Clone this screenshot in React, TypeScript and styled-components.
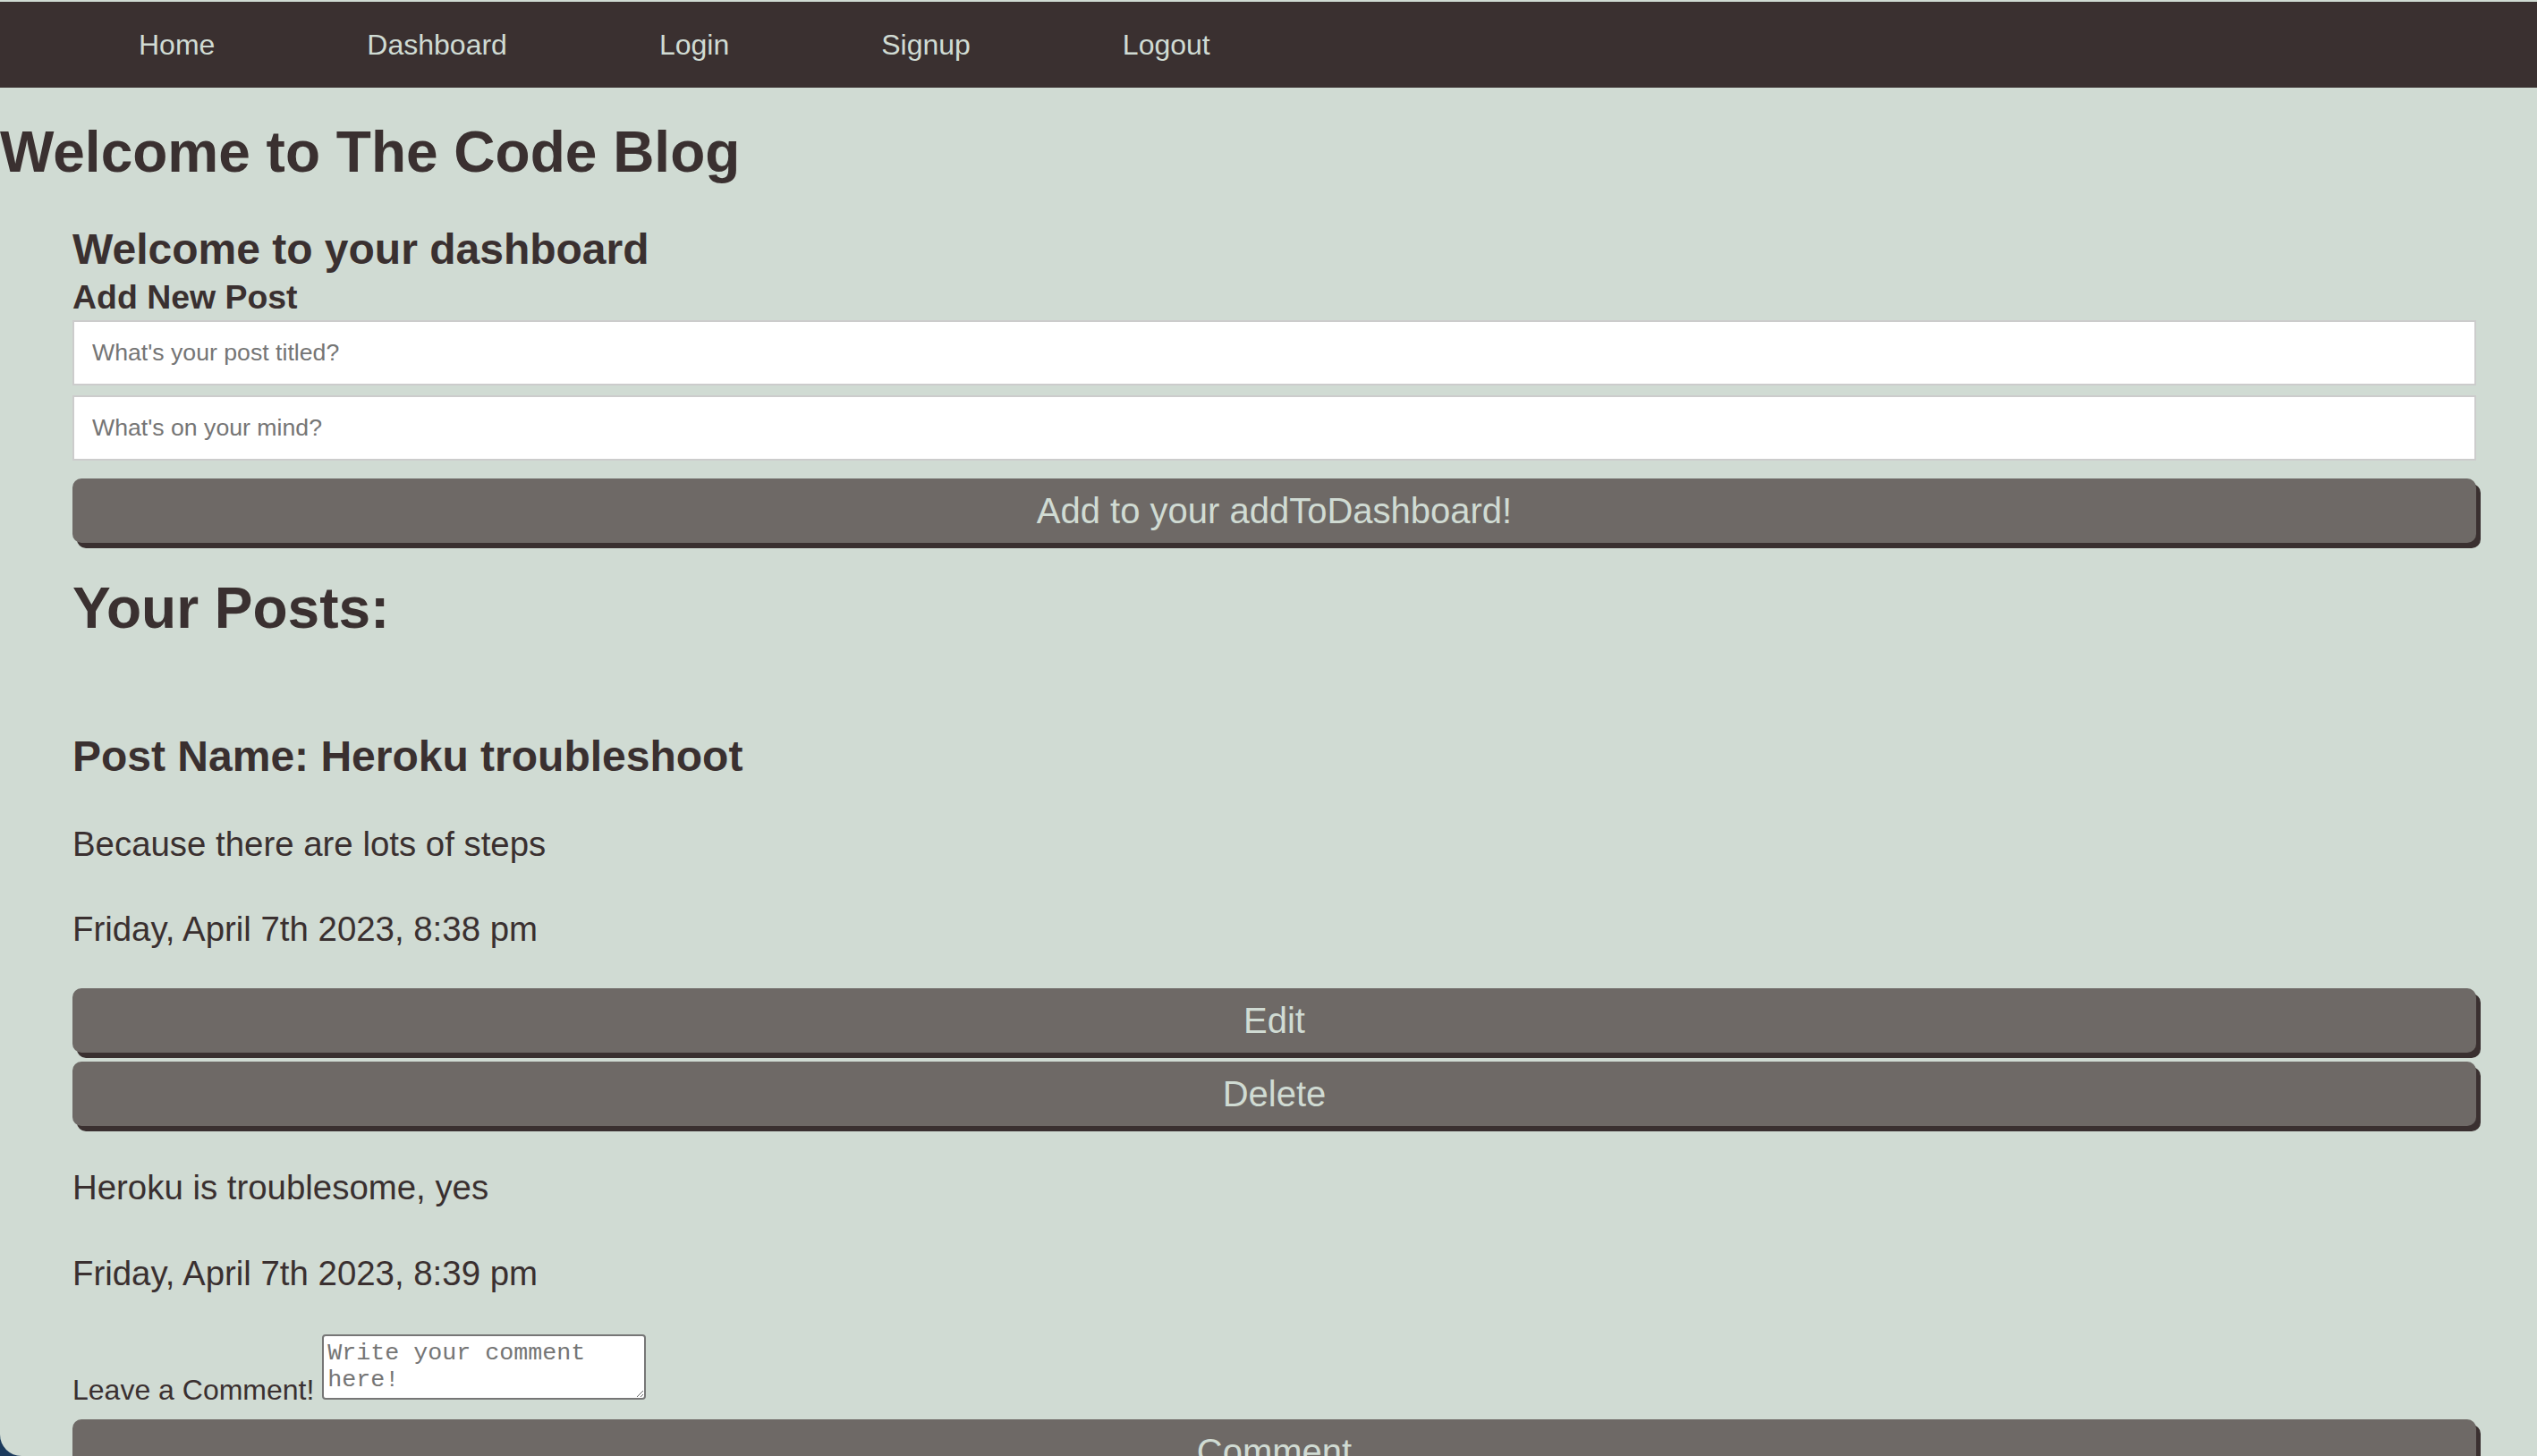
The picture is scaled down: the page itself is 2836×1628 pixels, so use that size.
import React from 'react';
import styled, { createGlobalStyle } from 'styled-components';

const GlobalStyle = createGlobalStyle`
  html {
    background: #1b3a5c;
  }
  body {
    margin: 0;
    overflow: hidden;
    font-family: 'Liberation Sans', Arial, Helvetica, sans-serif;
  }
`;

const Page = styled.div`
  height: 100vh;
  overflow: hidden;
  padding-top: 2px;
  box-sizing: border-box;
  background: #d0dbd3;
  border-bottom-left-radius: 24px;
  color: #3a3030;
`;

const NavBar = styled.nav`
  display: flex;
  align-items: center;
  height: 96px;
  padding-left: 70px;
  background: #3a3030;
`;

const NavLink = styled.a`
  padding: 0 85px;
  font-size: 32px;
  line-height: 40px;
  color: #d0dbd3;
  text-decoration: none;
  cursor: pointer;
`;

const SiteTitle = styled.h1`
  margin: 34px 0 0;
  font-size: 64px;
  line-height: 77px;
  font-weight: 700;
`;

const Dashboard = styled.main`
  padding: 0 68px 0 81px;
`;

const DashHeading = styled.h2`
  margin: 41px 0 0;
  font-size: 48px;
  line-height: 58px;
  font-weight: 700;
`;

const FormTitle = styled.h3`
  margin: 2px 0 0;
  font-size: 37.44px;
  line-height: 45px;
  font-weight: 700;
`;

const PostForm = styled.form`
  display: flex;
  flex-direction: column;
  margin-top: 3px;
`;

const TextInput = styled.input<{ $top?: number }>`
  box-sizing: border-box;
  width: 100%;
  height: 73px;
  margin: ${(p) => p.$top ?? 0}px 0 0;
  padding: 0 20px;
  border: 2px solid #cccccc;
  background: #ffffff;
  font-family: 'Liberation Sans', Arial, sans-serif;
  font-size: 26.67px;
  color: #3a3030;
  outline: none;

  &::placeholder {
    color: #757575;
  }
`;

const ActionButton = styled.button<{ $top: number }>`
  display: flex;
  align-items: center;
  justify-content: center;
  width: 100%;
  height: 72px;
  margin-top: ${(p) => p.$top}px;
  padding: 0;
  border: none;
  border-radius: 10px;
  background: #6e6966;
  box-shadow: 5px 6px 0 #3a3030;
  color: #d0dbd3;
  font-family: 'Liberation Sans', Arial, sans-serif;
  font-size: 40px;
  cursor: pointer;
`;

const PostsHeading = styled.h1`
  margin: 35px 0 0;
  font-size: 64px;
  line-height: 77px;
  font-weight: 700;
`;

const PostTitle = styled.h2`
  margin: 98px 0 0;
  font-size: 48px;
  line-height: 58px;
  font-weight: 700;
`;

const PostText = styled.p<{ $top: number }>`
  margin: ${(p) => p.$top}px 0 0;
  font-size: 38.4px;
  line-height: 46px;
`;

const CommentRow = styled.form`
  display: flex;
  align-items: flex-end;
  gap: 9px;
  margin-top: 45px;
`;

const CommentLabel = styled.label`
  font-size: 32px;
  line-height: 22px;
`;

const CommentBox = styled.textarea`
  box-sizing: border-box;
  width: 362px;
  height: 73px;
  padding: 4px;
  border: 2px solid #767676;
  border-radius: 4px;
  background: #ffffff;
  font-family: 'Liberation Mono', 'Courier New', monospace;
  font-size: 26.67px;
  line-height: 30px;

  &::placeholder {
    color: #757575;
  }
`;

const navItems = ['Home', 'Dashboard', 'Login', 'Signup', 'Logout'];

function App() {
  return (
    <>
      <GlobalStyle />
      <Page>
        <NavBar>
          {navItems.map((item) => (
            <NavLink key={item}>{item}</NavLink>
          ))}
        </NavBar>

        <SiteTitle>Welcome to The Code Blog</SiteTitle>

        <Dashboard>
          <DashHeading>Welcome to your dashboard</DashHeading>
          <FormTitle>Add New Post</FormTitle>
          <PostForm onSubmit={(e) => e.preventDefault()}>
            <TextInput placeholder="What's your post titled?" />
            <TextInput $top={11} placeholder="What's on your mind?" />
            <ActionButton $top={20} type="submit">
              Add to your addToDashboard!
            </ActionButton>
          </PostForm>

          <PostsHeading>Your Posts:</PostsHeading>

          <PostTitle>Post Name: Heroku troubleshoot</PostTitle>
          <PostText $top={46}>Because there are lots of steps</PostText>
          <PostText $top={49}>Friday, April 7th 2023, 8:38 pm</PostText>
          <ActionButton $top={43}>Edit</ActionButton>
          <ActionButton $top={10}>Delete</ActionButton>

          <PostText $top={46}>Heroku is troublesome, yes</PostText>
          <PostText $top={50}>Friday, April 7th 2023, 8:39 pm</PostText>

          <CommentRow onSubmit={(e) => e.preventDefault()}>
            <CommentLabel htmlFor="comment">Leave a Comment!</CommentLabel>
            <CommentBox id="comment" placeholder="Write your comment here!" />
          </CommentRow>
          <ActionButton $top={22}>Comment</ActionButton>
        </Dashboard>
      </Page>
    </>
  );
}

export default App;
